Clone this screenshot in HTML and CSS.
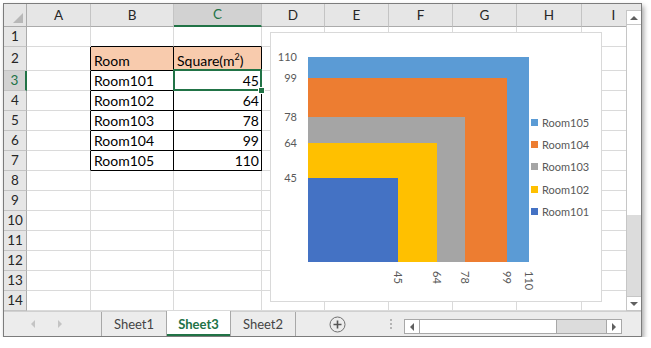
FILE: index.html
```html
<!DOCTYPE html>
<html lang="en">
<head>
    <meta charset="UTF-8">
    <title>Sheet3</title>
    <link rel="stylesheet" href="styles.css">
</head>
<body>
    <div class="window">
        <div class="main">
            <div class="sheet">
                <div id="grid" class="grid"></div>

                <div class="chart">
                    <div id="plot" class="plot"></div>
                    <div id="legend" class="legend"></div>
                </div>
            </div>

            <div class="vscroll">
                <div class="vtop"></div>
                <div class="vbtn"><span class="tri up"></span></div>
                <div class="vthumb"></div>
                <div class="vtrack"></div>
                <div class="vbtn"><span class="tri down"></span></div>
            </div>
        </div>

        <div class="tabbar">
            <div class="nav">
                <span class="tri navleft"></span>
                <span class="tri navright"></span>
            </div>
            <div class="tab">Sheet1</div>
            <div class="tab current">Sheet3</div>
            <div class="tab last">Sheet2</div>
            <div class="add">
                <svg width="17" height="17" viewBox="0 0 17 17">
                    <circle cx="8.5" cy="8.5" r="7.5" fill="none" stroke="#707070" stroke-width="1"/>
                    <path d="M8.5 4.5v8M4.5 8.5h8" stroke="#555" stroke-width="1.6"/>
                </svg>
            </div>
            <div class="dots"><i></i><i></i><i></i></div>
            <div class="hscroll">
                <div class="hbtn"><span class="tri left"></span></div>
                <div class="hthumb"></div>
                <div class="htrack"></div>
                <div class="hbtn"><span class="tri right"></span></div>
            </div>
        </div>
    </div>

    <script>
        // data for table + chart
        let rooms = [
            ['Room101', 45, '#4472c4'],
            ['Room102', 64, '#ffc000'],
            ['Room103', 78, '#a5a5a5'],
            ['Room104', 99, '#ed7d31'],
            ['Room105', 110, '#5b9bd5']
        ];
        let cols = ['A', 'B', 'C', 'D', 'E', 'F', 'G', 'H', 'I'];
        let grid = document.getElementById('grid');

        function addCell(cls, html){
            let d = document.createElement('div');
            d.className = 'cell ' + cls;
            if(html !== '' && html != null) d.innerHTML = '<span>' + html + '</span>';
            grid.appendChild(d);
        }

        /** header row **/
        addCell('corner');
        cols.forEach(function(c){
            addCell('head colhead' + (c == 'C' ? ' sel' : ''), c);
        });

        /** rows 1 ~ 14 **/
        for(let r = 1; r <= 14; r++){
            addCell('head rowhead' + (r == 3 ? ' sel' : ''), r);
            cols.forEach(function(c){
                let cls = '';
                let txt = '';
                let inTable = (c == 'B' || c == 'C') && r >= 2 && r <= 7;
                if(r == 1 && (c == 'B' || c == 'C')) cls = 'tb';
                if(c == 'A' && r >= 2 && r <= 7) cls = 'rb';
                if(inTable){
                    cls = 'tbl';
                    if(r == 2){
                        cls += ' hd';
                        txt = c == 'B' ? 'Room' : 'Square(m<sup>2</sup>)';
                    }else{
                        let room = rooms[r - 3];
                        if(c == 'B'){
                            txt = room[0];
                        }else{
                            cls += ' num';
                            txt = room[1];
                        }
                    }
                    if(r == 3 && c == 'C') cls += ' cursor';
                }
                addCell(cls, txt);
            });
        }

        /** chart **/
        let plot = document.getElementById('plot');
        let legend = document.getElementById('legend');
        let W = 221, H = 205, max = 110;

        rooms.slice().reverse().forEach(function(room){
            let w = room[1] * W / max;
            let h = room[1] * H / max;

            let bar = document.createElement('div');
            bar.className = 'bar';
            bar.style.width = w + 'px';
            bar.style.height = h + 'px';
            bar.style.background = room[2];
            plot.appendChild(bar);

            let yl = document.createElement('span');
            yl.className = 'ylabel';
            yl.style.top = (H - h) + 'px';
            yl.textContent = room[1];
            plot.appendChild(yl);

            let xl = document.createElement('span');
            xl.className = 'xlabel';
            xl.style.left = w + 'px';
            xl.textContent = room[1];
            plot.appendChild(xl);

            let item = document.createElement('div');
            item.innerHTML = '<i style="background:' + room[2] + '"></i>' + room[0];
            legend.appendChild(item);
        });
    </script>
</body>
</html>
```

FILE: styles.css
```css
body{
    margin: 0;
    background: #fff;
    font-family: Lato, "Liberation Sans", sans-serif;
}

.window{
    margin: 3px 0 0 3px;
    width: 639px;
    height: 334px;
    box-sizing: border-box;
    border: 1px solid #7c7c7c;
    box-shadow: 2px 3px 5px rgba(0, 0, 0, 0.35);
    display: flex;
    flex-direction: column;
    background: #fff;
}
.main{
    display: flex;
    height: 307px;
}
.sheet{
    position: relative;
    width: 622px;
    overflow: hidden;
}

/* cells */
.grid{
    display: grid;
    grid-template-columns: 23px 64px 83px 88px 63px 64px 64px 64px 65px 64px;
    grid-template-rows: 23px 20px 24px repeat(12, 20px);
}
.cell{
    box-sizing: border-box;
    border-right: 1px solid #dadada;
    border-bottom: 1px solid #dadada;
    display: flex;
    align-items: flex-end;
    padding: 0 2px 1px 3px;
    font-size: 14px;
    line-height: 17px;
    color: #000;
    white-space: nowrap;
    overflow: hidden;
}
.head{
    background: #e6e6e6;
    border-color: #c4c4c4;
    color: #262626;
    justify-content: center;
    align-items: center;
    padding: 0;
    font-size: 13.5px;
}
.colhead{
    border-bottom-color: #ababab;
}
.rowhead{
    border-right-color: #ababab;
}
.corner{
    position: relative;
    background: #e6e6e6;
    border-right-color: #ababab;
    border-bottom-color: #ababab;
}
.corner::after{
    content: "";
    position: absolute;
    right: 3px;
    bottom: 3px;
    width: 10px;
    height: 10px;
    background: #b8b8b8;
    clip-path: polygon(100% 0, 100% 100%, 0 100%);
}
.head.sel{
    background: #d2d2d2;
    color: #217346;
}
.colhead.sel{
    border-bottom: 2px solid #217346;
}
.rowhead.sel{
    border-right: 2px solid #217346;
}
.tb{
    border-bottom-color: #000;
}
.rb{
    border-right-color: #000;
}
.tbl{
    border-right-color: #000;
    border-bottom-color: #000;
}
.hd{
    background: #f8cbad;
}
.num{
    justify-content: flex-end;
}
sup{
    font-size: 9px;
    line-height: 0;
    vertical-align: 6px;
}
.cursor{
    position: relative;
    overflow: visible;
}
.cursor::after{
    content: "";
    position: absolute;
    left: -1px;
    top: -2px;
    right: -1px;
    bottom: -1px;
    border: 2px solid #217346;
}
.cursor::before{
    content: "";
    position: absolute;
    right: -4px;
    bottom: -4px;
    width: 5px;
    height: 5px;
    background: #217346;
    border: 1px solid #fff;
    z-index: 2;
}

/* chart */
.chart{
    position: absolute;
    left: 266px;
    top: 28px;
    width: 332px;
    height: 270px;
    box-sizing: border-box;
    border: 1px solid #d9d9d9;
    background: #fff;
    color: #595959;
    font-size: 11px;
}
.plot{
    position: absolute;
    left: 37px;
    top: 24px;
    width: 221px;
    height: 205px;
    display: grid;
}
.bar{
    grid-area: 1 / 1;
    align-self: end;
    justify-self: start;
}
.ylabel{
    position: absolute;
    right: calc(100% + 11px);
    transform: translateY(-50%);
    line-height: 14px;
}
.xlabel{
    position: absolute;
    top: calc(100% + 9px);
    writing-mode: vertical-rl;
    transform: translateX(-50%);
    line-height: 14px;
}
.legend{
    position: absolute;
    left: 260px;
    top: 78px;
    display: flex;
    flex-direction: column;
}
.legend div{
    height: 22.3px;
    display: flex;
    align-items: center;
    gap: 4px;
}
.legend i{
    width: 7px;
    height: 7px;
}

/* triangles */
.tri{
    display: block;
    width: 0;
    height: 0;
    border: 4px solid transparent;
}
.tri.up{
    border-bottom-color: #606060;
    border-top-width: 0;
}
.tri.down{
    border-top-color: #606060;
    border-bottom-width: 0;
}
.tri.left{
    border-right-color: #606060;
    border-left-width: 0;
}
.tri.right{
    border-left-color: #606060;
    border-right-width: 0;
}
.tri.navleft{
    border-right-color: #c4c4c4;
    border-left-width: 0;
}
.tri.navright{
    border-left-color: #c4c4c4;
    border-right-width: 0;
}

/* vertical scroll bar */
.vscroll{
    width: 15px;
    display: flex;
    flex-direction: column;
    background: #dcdcdc;
}
.vtop{
    height: 6px;
    background: #e6e6e6;
}
.vbtn{
    height: 15px;
    box-sizing: border-box;
    background: #fff;
    border: 1px solid #c6c6c6;
    border-right: none;
    display: flex;
    align-items: center;
    justify-content: center;
}
.vthumb{
    height: 190px;
    background: #fff;
    border-left: 1px solid #c6c6c6;
}
.vtrack{
    flex: 1;
    border-left: 1px solid #c6c6c6;
}

/* sheet tabs */
.tabbar{
    height: 25px;
    box-sizing: border-box;
    border-top: 1px solid #d0d0d0;
    background: #ececec;
    display: flex;
    font-size: 13px;
    color: #444;
}
.nav{
    width: 98px;
    border-right: 1px solid #a8a8a8;
    display: flex;
    align-items: center;
    gap: 23px;
    padding-left: 27px;
    box-sizing: border-box;
}
.tab{
    width: 64px;
    display: flex;
    align-items: center;
    justify-content: center;
}
.tab.current{
    position: relative;
    width: 65px;
    box-sizing: border-box;
    margin-top: -1px;
    background: #fff;
    border-left: 1px solid #a8a8a8;
    border-right: 1px solid #a8a8a8;
    color: #217346;
    font-weight: bold;
}
.tab.current::after{
    content: "";
    position: absolute;
    left: 0;
    right: 0;
    bottom: 0;
    height: 2px;
    background: #217346;
}
.tab.last{
    border-right: 1px solid #a8a8a8;
}
.add{
    width: 83px;
    display: flex;
    align-items: center;
    justify-content: center;
}
.dots{
    width: 24px;
    display: flex;
    flex-direction: column;
    align-items: center;
    justify-content: center;
    gap: 2px;
}
.dots i{
    width: 2px;
    height: 2px;
    background: #b4b4b4;
}
.hscroll{
    margin: 7px 0 0 1px;
    width: 218px;
    height: 15px;
    box-sizing: border-box;
    border: 1px solid #a8a8a8;
    background: #dcdcdc;
    display: flex;
}
.hbtn{
    width: 14px;
    background: #fff;
    display: flex;
    align-items: center;
    justify-content: center;
}
.hthumb{
    width: 136px;
    background: #fff;
    border-left: 1px solid #a8a8a8;
    border-right: 1px solid #a8a8a8;
}
.htrack{
    flex: 1;
    border-right: 1px solid #a8a8a8;
}
```
